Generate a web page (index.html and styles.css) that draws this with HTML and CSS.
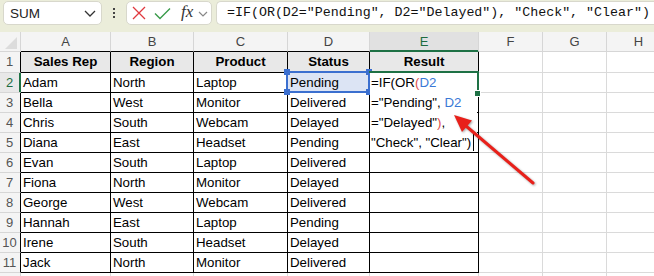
FILE: index.html
```html
<!DOCTYPE html>
<html>
<head>
<meta charset="utf-8">
<link rel="stylesheet" href="styles.css">
</head>
<body>
<div class="app">
  <div class="fbar">
    <div class="namebox">
      <span class="nb-text">SUM</span>
      <svg class="nb-chev" width="12" height="7" viewBox="0 0 12 7"><path d="M1 1 L6 6 L11 1" fill="none" stroke="#333" stroke-width="1.3"/></svg>
    </div>
    <div class="dots"><i></i><i></i><i></i></div>
    <div class="btns">
      <svg class="ico" width="14" height="14" viewBox="0 0 14 14"><path d="M1 1 L13 13 M13 1 L1 13" stroke="#e0393e" stroke-width="1.3" fill="none"/></svg>
      <svg class="ico" width="17" height="13" viewBox="0 0 17 13"><path d="M1 6.5 L6 11.5 L16 1.5" stroke="#3a9b4a" stroke-width="1.4" fill="none"/></svg>
      <span class="fx">fx</span>
      <svg class="fx-chev" width="10" height="6" viewBox="0 0 10 6"><path d="M1 1 L5 5 L9 1" fill="none" stroke="#888" stroke-width="1.2"/></svg>
    </div>
    <div class="formula">=IF(OR(D2="Pending", D2="Delayed"), "Check", "Clear")</div>
  </div>

  <div class="grid">
    <div class="corner"><span class="tri"></span></div>
    <div class="ch t">A</div><div class="ch t">B</div><div class="ch t">C</div><div class="ch t">D</div><div class="ch t act">E</div><div class="ch">F</div><div class="ch">G</div><div class="ch">H</div>

    <div class="rh t">1</div>
    <div class="c t h">Sales Rep</div><div class="c t h">Region</div><div class="c t h">Product</div><div class="c t h">Status</div><div class="c t h">Result</div><div class="c"></div><div class="c"></div><div class="c"></div>

    <div class="rh t act">2</div>
    <div class="c t">Adam</div><div class="c t">North</div><div class="c t">Laptop</div><div class="c t refd">Pending</div><div class="c t"></div><div class="c"></div><div class="c"></div><div class="c"></div>

    <div class="rh t">3</div>
    <div class="c t">Bella</div><div class="c t">West</div><div class="c t">Monitor</div><div class="c t">Delivered</div><div class="c t"></div><div class="c"></div><div class="c"></div><div class="c"></div>

    <div class="rh t">4</div>
    <div class="c t">Chris</div><div class="c t">South</div><div class="c t">Webcam</div><div class="c t">Delayed</div><div class="c t"></div><div class="c"></div><div class="c"></div><div class="c"></div>

    <div class="rh t">5</div>
    <div class="c t">Diana</div><div class="c t">East</div><div class="c t">Headset</div><div class="c t">Pending</div><div class="c t"></div><div class="c"></div><div class="c"></div><div class="c"></div>

    <div class="rh t">6</div>
    <div class="c t">Evan</div><div class="c t">South</div><div class="c t">Laptop</div><div class="c t">Delivered</div><div class="c t"></div><div class="c"></div><div class="c"></div><div class="c"></div>

    <div class="rh t">7</div>
    <div class="c t">Fiona</div><div class="c t">North</div><div class="c t">Monitor</div><div class="c t">Delayed</div><div class="c t"></div><div class="c"></div><div class="c"></div><div class="c"></div>

    <div class="rh t">8</div>
    <div class="c t">George</div><div class="c t">West</div><div class="c t">Webcam</div><div class="c t">Delivered</div><div class="c t"></div><div class="c"></div><div class="c"></div><div class="c"></div>

    <div class="rh t">9</div>
    <div class="c t">Hannah</div><div class="c t">East</div><div class="c t">Laptop</div><div class="c t">Pending</div><div class="c t"></div><div class="c"></div><div class="c"></div><div class="c"></div>

    <div class="rh t">10</div>
    <div class="c t">Irene</div><div class="c t">South</div><div class="c t">Headset</div><div class="c t">Delayed</div><div class="c t"></div><div class="c"></div><div class="c"></div><div class="c"></div>

    <div class="rh t">11</div>
    <div class="c t">Jack</div><div class="c t">North</div><div class="c t">Monitor</div><div class="c t">Delivered</div><div class="c t"></div><div class="c"></div><div class="c"></div><div class="c"></div>

    <div class="rh"></div>
    <div class="c"></div><div class="c"></div><div class="c"></div><div class="c"></div><div class="c"></div><div class="c"></div><div class="c"></div><div class="c"></div>
  </div>

  <div class="sel-ref">
    <span class="hd h1"></span><span class="hd h2"></span><span class="hd h3"></span><span class="hd h4"></span>
  </div>

  <div class="editor">
    <div class="ln">=IF(OR<span class="pr">(</span><span class="rf">D2</span></div>
    <div class="ln">="Pending", <span class="rf">D2</span></div>
    <div class="ln">="Delayed"<span class="pr">)</span>,</div>
    <div class="ln">"Check", "Clear")<span class="caret"></span></div>
  </div>

  <div class="active"><span class="fill"></span></div>

  <svg class="arrow" width="654" height="276" viewBox="0 0 654 276">
    <line x1="533" y1="183" x2="466" y2="126" stroke="#e8201a" stroke-width="3" stroke-linecap="round"/>
    <polygon points="454,115 472,120.5 462,132" fill="#e8201a"/>
  </svg>
</div>
</body>
</html>
```

FILE: styles.css
```css
* { box-sizing: border-box; }
html, body { margin: 0; padding: 0; background: #fff; }
.app {
  position: relative;
  width: 654px;
  height: 276px;
  overflow: hidden;
  font-family: "Liberation Sans", Arial, sans-serif;
}

/* formula bar */
.fbar {
  height: 32px;
  background: #ebedda;
  display: flex;
  align-items: flex-start;
  padding-top: 1px;
  padding-left: 3px;
}
.namebox {
  width: 99px;
  height: 24px;
  background: #fff;
  border: 1px solid #d8d8cc;
  border-radius: 5px;
  display: flex;
  align-items: center;
  justify-content: space-between;
  padding: 0 5px 0 6px;
}
.nb-text { font-size: 13.5px; color: #222; }
.nb-chev { margin-top: 1px; }
.dots {
  width: 24px;
  height: 24px;
  display: flex;
  flex-direction: column;
  align-items: center;
  justify-content: center;
  gap: 2px;
}
.dots i { display: block; width: 2px; height: 2px; background: #444; }
.btns {
  width: 86px;
  height: 24px;
  background: #fff;
  border: 1px solid #d8d8cc;
  border-radius: 5px;
  display: flex;
  align-items: center;
  padding-left: 5px;
}
.btns .ico:nth-child(1) { margin-right: 8px; }
.btns .ico:nth-child(2) { margin-right: 10px; }
.fx {
  font-family: "Liberation Serif", "Times New Roman", serif;
  font-style: italic;
  font-size: 17px;
  color: #333;
  margin-right: 5px;
  margin-top: -2px;
}
.fx-chev { margin-top: 1px; }
.formula {
  margin-left: 4px;
  flex: 1;
  height: 24px;
  background: #fff;
  border: 1px solid #d8d8cc;
  border-right: none;
  border-radius: 5px 0 0 5px;
  font-family: "Liberation Mono", "DejaVu Sans Mono", monospace;
  font-size: 13.3px;
  line-height: 22px;
  padding-left: 10px;
  white-space: nowrap;
  color: #111;
}

/* grid */
.grid {
  display: grid;
  grid-template-columns: 21px 90px 83px 94px 82px 109px 64px 64px 64px;
  grid-template-rows: 20px 21px repeat(11, 20px) 20px;
  font-size: 13.3px;
  color: #000;
}
.corner {
  position: relative;
  background: #f4f4f4;
  border-right: 1px solid #d6d6d6;
  border-bottom: 1px solid #d6d6d6;
}
.tri {
  position: absolute;
  right: 3px;
  bottom: 2px;
  width: 0;
  height: 0;
  border-left: 12px solid transparent;
  border-bottom: 12px solid #dcdcdc;
}
.ch {
  background: #f4f4f4;
  border-right: 1px solid #d6d6d6;
  border-bottom: 1px solid #d6d6d6;
  color: #444;
  font-size: 13px;
  text-align: center;
  line-height: 19px;
}
.ch.t { border-bottom-color: #000; }
.ch.act {
  background: #e1e1e1;
  color: #1d6b3f;
  border-bottom-color: #1e7145;
  box-shadow: inset 0 -1px 0 #1e7145;
}
.rh {
  background: #f4f4f4;
  border-right: 1px solid #d6d6d6;
  border-bottom: 1px solid #d6d6d6;
  color: #555;
  font-size: 13px;
  text-align: center;
  line-height: 19px;
  padding-right: 1px;
}
.rh.t { border-right-color: #000; }
.rh.act {
  color: #1d6b3f;
  background: #e8e8e8;
  border-right-color: #1e7145;
  box-shadow: inset -1px 0 0 #1e7145;
}
.c {
  border-right: 1px solid #dadada;
  border-bottom: 1px solid #dadada;
  padding-left: 2px;
  line-height: 19px;
  white-space: nowrap;
  overflow: hidden;
}
.c.t { border-right-color: #000; border-bottom-color: #000; }
.c.h {
  background: #e8e8e8;
  font-weight: bold;
  text-align: center;
  padding-left: 0;
  line-height: 20px;
}
.c.refd { background: #dce4f4; }

/* referenced cell D2 highlight */
.sel-ref {
  position: absolute;
  left: 286px;
  top: 71px;
  width: 84px;
  height: 22px;
  border: 2px solid #3b6fcf;
}
.hd {
  position: absolute;
  width: 6px;
  height: 6px;
  background: #3b6fcf;
}
.h1 { left: -4px; top: -4px; }
.h2 { right: -4px; top: -4px; }
.h3 { left: -4px; bottom: -4px; }
.h4 { right: -4px; bottom: -4px; }

/* in-cell editor */
.editor {
  position: absolute;
  left: 370px;
  top: 73px;
  width: 107px;
  height: 79px;
  background: #fff;
  font-size: 13.3px;
  line-height: 20px;
  padding-left: 1px;
  white-space: nowrap;
  color: #000;
}
.ln { height: 20px; }
.rf { color: #3a78d6; }
.pr { color: #e2504e; }
.caret {
  display: inline-block;
  width: 1px;
  height: 17px;
  background: #000;
  vertical-align: -4px;
  margin-left: 2px;
}

/* active cell E2 outline */
.active {
  position: absolute;
  left: 369px;
  top: 71px;
  width: 110px;
  height: 23px;
  border-top: 2px solid #1e7145;
  border-right: 2px solid #1e7145;
}
.fill {
  position: absolute;
  right: -4px;
  bottom: -3px;
  width: 5px;
  height: 5px;
  background: #1e7145;
  border: 1px solid #fff;
  box-sizing: content-box;
}

.arrow {
  position: absolute;
  left: 0;
  top: 0;
  pointer-events: none;
  filter: drop-shadow(1px 1px 1px rgba(0, 0, 0, 0.35));
}
```
